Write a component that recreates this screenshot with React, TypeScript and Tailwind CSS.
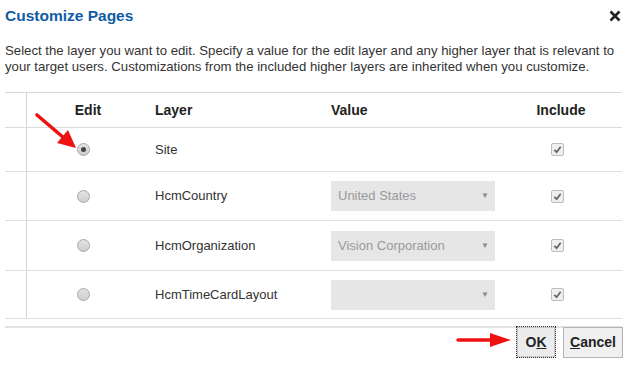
import React from "react";

type Row = { name: string; value?: string; select: boolean; h: string };

const rows: Row[] = [
  { name: "Site", select: false, h: "h-[44px]" },
  { name: "HcmCountry", value: "United States", select: true, h: "h-[49px]" },
  { name: "HcmOrganization", value: "Vision Corporation", select: true, h: "h-[50px]" },
  { name: "HcmTimeCardLayout", value: "", select: true, h: "h-[48px]" },
];

function Radio({ on }: { on: boolean }) {
  return (
    <span className="w-[13px] h-[13px] rounded-full border border-[#a8a8a8] bg-gradient-to-b from-[#e2e2e2] to-[#cfcfcf] flex items-center justify-center">
      {on && <span className="w-[5px] h-[5px] rounded-full bg-[#444]" />}
    </span>
  );
}

function Check() {
  return (
    <span className="w-[13px] h-[13px] rounded-[2px] border border-[#bdbdbd] bg-[#efefef] flex items-center justify-center">
      <svg width="9" height="9" viewBox="0 0 10 10">
        <path d="M1.5 5.5 L4 8 L8.5 2" fill="none" stroke="#666" strokeWidth="2" />
      </svg>
    </span>
  );
}

export default function App() {
  return (
    <div className="relative w-[628px] h-[366px] bg-white text-[#333] font-['Liberation_Sans',Arial,sans-serif] overflow-hidden">
      {/* Title bar */}
      <div className="flex items-center justify-between pl-[5px] pr-[7px] pt-[6px] h-[26px]">
        <h1 className="text-[15.5px] leading-[20px] font-bold text-[#0f5ca6]">Customize Pages</h1>
        <svg width="12" height="12" viewBox="0 0 12 12">
          <path d="M1.5 1.5 L10.5 10.5 M10.5 1.5 L1.5 10.5" stroke="#222" strokeWidth="2.6" />
        </svg>
      </div>

      <p className="mt-[17px] px-[5px] text-[13.2px] leading-[16px] text-[#333]">
        Select the layer you want to edit. Specify a value for the edit layer and any higher layer that is relevant to
        <br />
        your target users. Customizations from the included higher layers are inherited when you customize.
      </p>

      {/* Table */}
      <div className="mt-[17px] mx-[5px] w-[617px] border-t border-[#d8d8d8]">
        <div className="grid grid-cols-[22px_112px_176px_194px_96px_1fr] h-[35px] border-b border-[#dcdcdc] text-[14px] font-bold text-[#222]">
          <div className="border-r border-[#d4d4d4]" />
          <div className="flex items-center justify-center pl-[10px]">Edit</div>
          <div className="flex items-center pl-[16px]">Layer</div>
          <div className="flex items-center pl-[16px]">Value</div>
          <div className="flex items-center justify-center pl-[8px]">Include</div>
          <div />
        </div>
        {rows.map((r, i) => (
          <div
            key={r.name}
            className={`grid grid-cols-[22px_112px_176px_194px_96px_1fr] ${r.h} border-b border-[#e0e0e0] text-[13px]`}
          >
            <div className="border-r border-[#d4d4d4]" />
            <div className="flex items-center justify-center">
              <Radio on={i === 0} />
            </div>
            <div className="flex items-center pl-[16px] text-[#333]">{r.name}</div>
            <div className="flex items-center pl-[16px]">
              {r.select && (
                <div className="w-[164px] h-[30px] bg-[#e6e6e6] flex items-center justify-between pl-[7px] pr-[6px] text-[#9a9a9a]">
                  <span>{r.value}</span>
                  <span className="text-[8px] text-[#8a8a8a]">▼</span>
                </div>
              )}
            </div>
            <div className="flex items-center justify-center">
              <Check />
            </div>
            <div />
          </div>
        ))}
      </div>

      {/* Footer */}
      <div className="mt-[7px] mx-[5px] w-[617px] border-t-2 border-[#e2e2e2] flex justify-end gap-[7px]">
        <button className="-mt-[2px] w-[40px] h-[32px] border border-dotted border-[#333] bg-[#ececec] text-[14px] font-bold text-[#222] flex items-center justify-center">
          <span className="border border-[#c4c4c4] w-[38px] h-[30px] flex items-center justify-center">
            O<span className="underline">K</span>
          </span>
        </button>
        <button className="-mt-[1px] w-[60px] h-[31px] border border-[#b4b4b4] bg-[#f0f0f0] text-[14px] font-bold text-[#222] flex items-center justify-center mr-[-1px]">
          <span className="underline">C</span>ancel
        </button>
      </div>

      {/* Annotation arrows */}
      <svg className="absolute left-0 top-0 pointer-events-none" width="628" height="366">
        <path d="M37 115 L64 138" stroke="#ee1111" strokeWidth="3.6" strokeLinecap="round" />
        <path d="M76 148 L57 143 L68 130 Z" fill="#ee1111" />
        <path d="M458 340 L492 340" stroke="#ee1111" strokeWidth="3.4" strokeLinecap="round" />
        <path d="M511 340 L490 333 L490 347 Z" fill="#ee1111" />
      </svg>
    </div>
  );
}
